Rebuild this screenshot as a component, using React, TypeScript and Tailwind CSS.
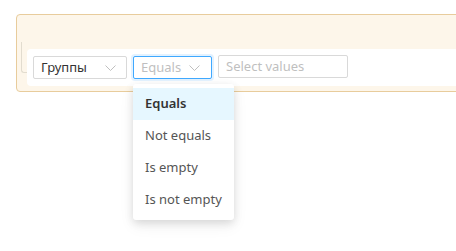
import { useState } from "react";

const options = ["Equals", "Not equals", "Is empty", "Is not empty"];

function Chevron() {
  return (
    <svg width="11" height="6" viewBox="0 0 11 6" fill="none" className="shrink-0">
      <path d="M0.5 0.5L5.5 5.5L10.5 0.5" stroke="#bfbfbf" strokeWidth="1" />
    </svg>
  );
}

export default function App() {
  const [active] = useState(0);

  return (
    <div className="h-[251px] w-full overflow-hidden bg-white pl-[16px] pt-[14px] font-['Noto_Sans',sans-serif] text-[13px]">
      <div className="relative h-[78px] w-[460px] rounded-[4px] border border-[#e8cc9c] bg-[#fdf6ea]">
        {/* tree connector */}
        <div className="absolute left-[4px] top-[27px] h-[31px] w-[6px] rounded-bl-[3px] border-b border-l border-[#e2dccf]" />

        <div className="ml-[10px] mt-[34px] flex h-[37px] items-center gap-[6px] rounded-[4px] bg-white px-[6px]">
          <div className="flex h-[23px] w-[94px] items-center justify-between rounded-[2px] border border-[#d9d9d9] bg-white pl-[7px] pr-[10px] text-[#333]">
            <span>Группы</span>
            <Chevron />
          </div>

          <div className="relative">
            <div className="flex h-[23px] w-[79px] items-center gap-[8px] rounded-[2px] border border-[#40a9ff] bg-white pl-[7px] text-[#bfbfbf] shadow-[0_0_0_2px_rgba(24,144,255,0.12)]">
              <span>Equals</span>
              <Chevron />
            </div>

            <div className="absolute left-0 top-[28px] z-10 w-[101px] rounded-[3px] bg-white py-[4px] shadow-[0_3px_8px_rgba(0,0,0,0.12),0_6px_16px_rgba(0,0,0,0.06)]">
              {options.map((o, i) => (
                <div
                  key={o}
                  className={
                    i === active
                      ? "flex h-[32px] items-center bg-[#e6f7ff] pl-[12px] font-semibold text-[#333]"
                      : "flex h-[32px] items-center pl-[12px] text-[#555]"
                  }
                >
                  {o}
                </div>
              ))}
            </div>
          </div>

          <div className="mb-[2px] flex h-[23px] w-[130px] items-center rounded-[2px] border border-[#d9d9d9] bg-white pl-[7px] text-[#bfbfbf]">
            Select values
          </div>
        </div>
      </div>
    </div>
  );
}
